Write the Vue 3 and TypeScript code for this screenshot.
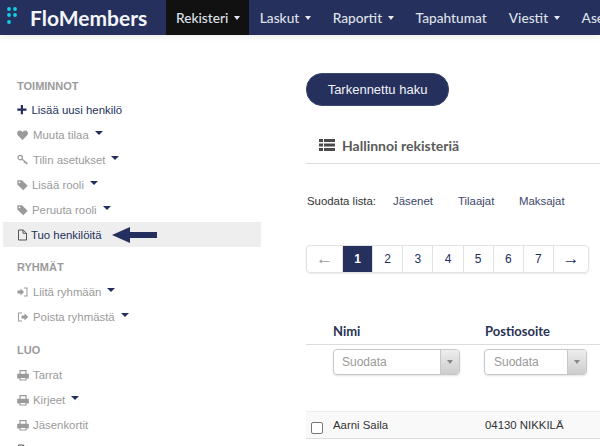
<script setup lang="ts">
interface Item { label: string; icon: string; caret?: boolean; dark?: boolean; active?: boolean; arrow?: boolean }
interface Group { title: string; items: Item[] }
const groups: Group[] = [
  { title: 'TOIMINNOT', items: [
    { label: 'Lisää uusi henkilö', icon: 'plus', dark: true },
    { label: 'Muuta tilaa', icon: 'heart', caret: true },
    { label: 'Tilin asetukset', icon: 'key', caret: true },
    { label: 'Lisää rooli', icon: 'tag', caret: true },
    { label: 'Peruuta rooli', icon: 'tag', caret: true },
    { label: 'Tuo henkilöitä', icon: 'file', dark: true, active: true, arrow: true },
  ]},
  { title: 'RYHMÄT', items: [
    { label: 'Liitä ryhmään', icon: 'login', caret: true },
    { label: 'Poista ryhmästä', icon: 'logout', caret: true },
  ]},
  { title: 'LUO', items: [
    { label: 'Tarrat', icon: 'print' },
    { label: 'Kirjeet', icon: 'print', caret: true },
    { label: 'Jäsenkortit', icon: 'print' },
    { label: 'Excel', icon: 'file' },
  ]},
]
const nav = [
  { label: 'Rekisteri', caret: true, active: true },
  { label: 'Laskut', caret: true },
  { label: 'Raportit', caret: true },
  { label: 'Tapahtumat' },
  { label: 'Viestit', caret: true },
  { label: 'Asetukset' },
]
const pages = ['←', '1', '2', '3', '4', '5', '6', '7', '→']
</script>

<template>
  <div class="page">
    <header class="nav">
      <div class="brand">
        <svg class="logo" width="10" height="18" viewBox="0 0 10 18">
          <circle cx="2" cy="2" r="1.900" /><circle cx="8" cy="2" r="1.900" />
          <circle cx="2" cy="8" r="1.900" /><circle cx="8" cy="8" r="1.900" />
          <circle cx="2" cy="15" r="1.900" />
        </svg>
        <span class="brand-name">FloMembers</span>
      </div>
      <nav class="menu">
        <span v-for="n in nav" :key="n.label" class="menu-item" :class="{ on: n.active }">
          {{ n.label }}<i v-if="n.caret" class="caret light"></i>
        </span>
      </nav>
    </header>
    <div class="body">
      <aside class="side">
        <section v-for="g in groups" :key="g.title" class="group">
          <h4>{{ g.title }}</h4>
          <div v-for="it in g.items" :key="it.label" class="row" :class="{ active: it.active, dark: it.dark }">
            <svg class="ico" :class="'i-' + it.icon" width="12" height="12" viewBox="0 0 12 12">
              <path v-if="it.icon === 'plus'" d="M3.800 1h2.200v3.500h3.500v2.200H6v3.500H3.800V6.700H.3V4.500h3.500z" fill="#232f5c" />
              <path v-else-if="it.icon === 'heart'" d="M5.500 11 1 6.500C-.7 4.700.2 1.500 2.800 1.500c1.300 0 2.100.8 2.700 1.700.6-.9 1.400-1.700 2.700-1.700 2.600 0 3.500 3.200 1.800 5z" fill="#9a9a9a" />
              <g v-else-if="it.icon === 'key'" fill="none" stroke="#9a9a9a" stroke-width="1.200">
                <circle cx="3.200" cy="3.600" r="2.200" /><path d="m5 5.200 5.500 4.300M8 7.600 7 8.900M9.800 9l-1 1.200" />
              </g>
              <path v-else-if="it.icon === 'tag'" d="M.3 1.200h4.600l5.800 5.600-4.400 4.400L.3 5.600zm2.200 1.200a.9.9 0 1 0 0 1.800.9.9 0 0 0 0-1.800z" fill="#9a9a9a" fill-rule="evenodd" />
              <path v-else-if="it.icon === 'file'" d="M1.500 1h4.700l3.300 3.200V11h-8zM6 1v3.300h3.500" fill="none" stroke="#555" stroke-width="1" />
              <g v-else-if="it.icon === 'login'" fill="#9a9a9a">
                <path d="M.5 4.400h3V2.600L7 6 3.500 9.400V7.600h-3z" /><path d="M7 1.500h3.500v9H7v-1h2.500v-7H7z" />
              </g>
              <g v-else-if="it.icon === 'logout'" fill="#9a9a9a">
                <path d="M5 1.500H1v9h4v-1H2v-7h3z" /><path d="M4.500 4.400h3V2.600L11.200 6 7.500 9.400V7.600h-3z" />
              </g>
              <g v-else fill="none" stroke="#9a9a9a" stroke-width="1.200">
                <path d="M3 5V1.600h6V5" /><path d="M2.500 9H.8V5.400h10.400V9H9.500" fill="#9a9a9a" /><path d="M3 7.800h6V11H3z" />
              </g>
            </svg>
            <span>{{ it.label }}</span>
            <i v-if="it.caret" class="caret navy"></i>
            <svg v-if="it.arrow" class="arrow" width="45" height="16" viewBox="0 0 45 16">
              <path d="M0 8 18 0v5h27v6H18v5z" fill="#232f5c" />
            </svg>
          </div>
        </section>
      </aside>
      <main class="main">
        <button class="search" type="button">Tarkennettu haku</button>
        <div class="panel-title">
          <svg class="list-ico" width="16" height="12" viewBox="0 0 16 12" fill="#4a4a4a">
            <rect x="0" y="0" width="4" height="3" /><rect x="5" y="0" width="11" height="3" />
            <rect x="0" y="4.500" width="4" height="3" /><rect x="5" y="4.500" width="11" height="3" />
            <rect x="0" y="9" width="4" height="3" /><rect x="5" y="9" width="11" height="3" />
          </svg>
          <span>Hallinnoi rekisteriä</span>
        </div>
        <div class="filters">
          <span class="flabel">Suodata lista:</span>
          <a>Jäsenet</a><a>Tilaajat</a><a>Maksajat</a>
        </div>
        <div class="pager">
          <span v-for="(p, i) in pages" :key="p" class="pg" :class="{ cur: p === '1', prev: i === 0, next: i === 8 }">{{ p }}</span>
        </div>
        <div class="thead">
          <span class="c1">Nimi</span>
          <span class="c2">Postiosoite</span>
        </div>
        <div class="tfilter">
          <div class="sel s1"><span>Suodata</span><b><i></i></b></div>
          <div class="sel s2"><span>Suodata</span><b><i></i></b></div>
        </div>
        <div class="trow">
          <span class="check"></span>
          <span class="c1">Aarni Saila</span>
          <span class="c2">04130 NIKKILÄ</span>
        </div>
      </main>
    </div>
  </div>
</template>

<style>
html, body { margin: 0; padding: 0; background: #fff; overflow: hidden; }
</style>

<style scoped>
.page { width: 600px; height: 446px; overflow: hidden; font-family: "Liberation Sans", Arial, sans-serif; font-size: 11.400px; color: #232f5c; }
.nav { height: 35px; background: #25305d; display: flex; box-shadow: 0 2px 6px rgba(0,0,0,.08); white-space: nowrap; }
.brand { width: 166px; display: flex; align-items: center; flex: none; }
.logo { margin-left: 7px; fill: #12cfe8; flex: none; margin-top: -3px; }
.brand-name { margin-left: 13px; font-family: Lato, sans-serif; font-weight: 700; font-size: 21px; color: #f4f5f8; }
.menu { display: flex; }
.menu-item { display: flex; align-items: center; padding: 0 11px; font-family: Lato, sans-serif; font-size: 13.700px; font-weight: 500; color: #dfe1e8; }
.menu-item.on { background: #111; padding: 0 9px 0 10px; }
.caret { display: inline-block; width: 0; height: 0; border-left: 3.500px solid transparent; border-right: 3.500px solid transparent; }
.caret.light { border-top: 4px solid #e8e9ee; margin-left: 5.500px; }
.caret.navy { border-top: 4px solid #232f5c; margin-left: 6px; margin-top: -4px; border-left-width: 4px; border-right-width: 4px; }
.body { display: flex; }
.side { width: 261px; flex: none; padding: 44px 0 0 3px; box-sizing: border-box; }
.group { margin-bottom: 13px; }
h4 { margin: 0; padding-left: 14px; height: 15px; line-height: 15px; font-size: 11px; font-weight: 700; color: #9b9b9b; }
.group h4 + .row { margin-top: 4px; }
.group:first-child h4 + .row { margin-top: 3px; }
.group:nth-child(2) { margin-bottom: 14px; }
.row { height: 25px; display: flex; align-items: center; padding-left: 14px; color: #9a9a9a; font-size: 11.400px; }
.row.dark { color: #232f5c; }
.row.active { background: #eeeeee; }
.ico { flex: none; margin-right: 4px; }
.i-plus { margin-right: 2.500px; }
.i-tag { margin-right: 3px; }
.i-file { margin-right: 2px; }
.arrow { margin-left: 10px; }
.main { flex: 1; padding: 38px 0 0 45px; min-width: 0; }
.search { display: block; width: 143px; height: 33px; border: 1px solid #3a4570; border-radius: 16px; background: #25305d; color: #f2f3f6; font-family: "Liberation Sans", Arial, sans-serif; font-size: 13px; padding: 0; }
.panel-title { margin-top: 22px; height: 35px; display: flex; align-items: center; padding-left: 13px; gap: 7px; border-bottom: 1px solid #ddd; font-family: Lato, sans-serif; font-size: 14px; font-weight: 700; color: #5a5a5a; }
.list-ico { margin-top: -2px; }
.filters { margin-top: 30px; height: 14px; line-height: 14px; display: flex; padding-left: 1px; color: #333; }
.flabel { width: 86px; }
.filters a { color: #3c4668; }
.filters a:nth-child(2) { width: 65px; }
.filters a:nth-child(3) { width: 61px; }
.pager { margin-top: 37px; width: 283px; height: 28px; display: flex; border: 1px solid #e2e2e2; border-radius: 4px; box-sizing: border-box; box-shadow: 0 1px 2px rgba(0,0,0,.08); }
.pg { flex: 1 1 0; display: flex; align-items: center; justify-content: center; border-left: 1px solid #e2e2e2; color: #232f5c; font-size: 12px; }
.pg.prev { flex: 0 0 35px; border-left: 0; color: #999; font-size: 17px; }
.pg.next { flex: 0 0 34px; font-size: 17px; }
.pg.cur { background: #25305d; color: #fff; font-weight: 700; }
.thead { margin-top: 48px; height: 20px; display: flex; align-items: center; border-bottom: 1px solid #ddd; font-family: Lato, sans-serif; font-weight: 700; font-size: 13px; color: #2a3355; padding-bottom: 3px; }
.c1 { margin-left: 27px; width: 152px; flex: none; }
.c2 { flex: none; }
.tfilter { margin-top: 4px; display: flex; height: 26px; padding-left: 27px; gap: 24px; }
.sel { height: 26px; box-sizing: border-box; border: 1px solid #c8c8c8; border-radius: 4px; display: flex; justify-content: space-between; color: #999; line-height: 24px; padding-left: 8px; font-size: 12px; box-shadow: 0 1px 2px rgba(0,0,0,.12); }
.s1 { width: 127px; }
.s2 { width: 103px; padding-left: 9px; }
.sel b { width: 18px; background: linear-gradient(#eee, #ccc); border-left: 1px solid #c8c8c8; display: flex; align-items: center; justify-content: center; border-radius: 0 3px 3px 0; }
.sel b i { width: 0; height: 0; border-left: 3px solid transparent; border-right: 3px solid transparent; border-top: 4px solid #888; }
.trow { margin-top: 36px; height: 28px; box-sizing: border-box; background: #f9f9f9; border-top: 1px solid #eee; border-bottom: 1px solid #ddd; display: flex; align-items: center; position: relative; color: #333; font-size: 11.400px; }
.check { position: absolute; left: 5px; top: 10px; width: 10px; height: 10px; border: 1px solid #777; border-radius: 2px; background: #fff; }
</style>
